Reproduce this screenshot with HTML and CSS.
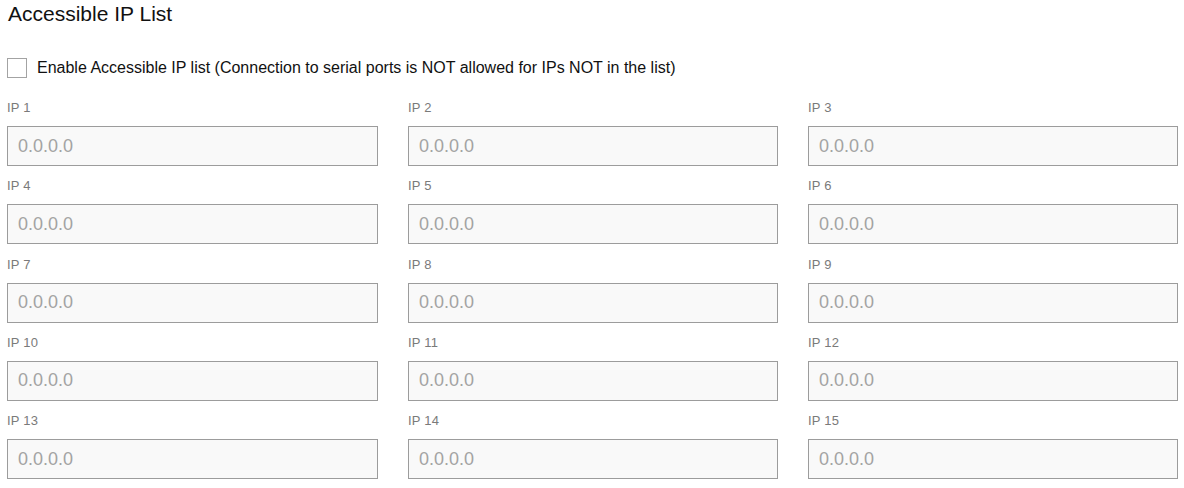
FILE: index.html
```html
<!DOCTYPE html>
<html lang="en">
<head>
<meta charset="utf-8">
<title>Accessible IP List</title>
<link rel="stylesheet" href="styles.css">
</head>
<body>
<section class="panel">
  <h2 class="panel-title">Accessible IP List</h2>
  <label class="check-row">
    <input type="checkbox" class="check-box">
    <span class="check-text">Enable Accessible IP list (Connection to serial ports is NOT allowed for IPs NOT in the list)</span>
  </label>
  <div class="ip-grid">
    <div class="field"><label class="field-label" for="ip1">IP 1</label><input class="field-input" id="ip1" type="text" placeholder="0.0.0.0"></div>
    <div class="field"><label class="field-label" for="ip2">IP 2</label><input class="field-input" id="ip2" type="text" placeholder="0.0.0.0"></div>
    <div class="field"><label class="field-label" for="ip3">IP 3</label><input class="field-input" id="ip3" type="text" placeholder="0.0.0.0"></div>
    <div class="field"><label class="field-label" for="ip4">IP 4</label><input class="field-input" id="ip4" type="text" placeholder="0.0.0.0"></div>
    <div class="field"><label class="field-label" for="ip5">IP 5</label><input class="field-input" id="ip5" type="text" placeholder="0.0.0.0"></div>
    <div class="field"><label class="field-label" for="ip6">IP 6</label><input class="field-input" id="ip6" type="text" placeholder="0.0.0.0"></div>
    <div class="field"><label class="field-label" for="ip7">IP 7</label><input class="field-input" id="ip7" type="text" placeholder="0.0.0.0"></div>
    <div class="field"><label class="field-label" for="ip8">IP 8</label><input class="field-input" id="ip8" type="text" placeholder="0.0.0.0"></div>
    <div class="field"><label class="field-label" for="ip9">IP 9</label><input class="field-input" id="ip9" type="text" placeholder="0.0.0.0"></div>
    <div class="field"><label class="field-label" for="ip10">IP 10</label><input class="field-input" id="ip10" type="text" placeholder="0.0.0.0"></div>
    <div class="field"><label class="field-label" for="ip11">IP 11</label><input class="field-input" id="ip11" type="text" placeholder="0.0.0.0"></div>
    <div class="field"><label class="field-label" for="ip12">IP 12</label><input class="field-input" id="ip12" type="text" placeholder="0.0.0.0"></div>
    <div class="field"><label class="field-label" for="ip13">IP 13</label><input class="field-input" id="ip13" type="text" placeholder="0.0.0.0"></div>
    <div class="field"><label class="field-label" for="ip14">IP 14</label><input class="field-input" id="ip14" type="text" placeholder="0.0.0.0"></div>
    <div class="field"><label class="field-label" for="ip15">IP 15</label><input class="field-input" id="ip15" type="text" placeholder="0.0.0.0"></div>
  </div>
</section>
</body>
</html>
```

FILE: styles.css
```css
html, body {
  margin: 0;
  padding: 0;
  background: #ffffff;
}

body {
  font-family: "Liberation Sans", Arial, sans-serif;
  color: #111111;
}

.panel {
  padding: 2px 6px 0 7px;
}

.panel-title {
  margin: 0 0 0 1px;
  font-size: 21px;
  font-weight: normal;
  line-height: 24px;
  color: #111111;
}

.check-row {
  display: flex;
  align-items: center;
  gap: 10px;
  margin-top: 32px;
  cursor: pointer;
}

.check-box {
  appearance: none;
  -webkit-appearance: none;
  margin: 0;
  width: 20px;
  height: 20px;
  border: 1px solid #a3a3a3;
  background: #ffffff;
  box-sizing: border-box;
}

.check-text {
  font-size: 16px;
  line-height: 20px;
  color: #111111;
}

.ip-grid {
  display: grid;
  grid-template-columns: 371px 370px 370px;
  column-gap: 30px;
  row-gap: 11.25px;
  margin-top: 21px;
}

.field {
  display: flex;
  flex-direction: column;
}

.field-label {
  font-size: 13px;
  line-height: 18px;
  letter-spacing: 0.2px;
  color: #7a7a7a;
  margin: 0 0 9px 0;
}

.field-input {
  box-sizing: border-box;
  width: 100%;
  height: 40px;
  margin: 0;
  padding: 0 10px;
  border: 1px solid #9c9c9c;
  border-radius: 0;
  background: #f9f9f9;
  font-family: "Liberation Sans", Arial, sans-serif;
  font-size: 18px;
  color: #333333;
  outline: none;
}

.field-input::placeholder {
  color: #a3a3a3;
  opacity: 1;
}
```
